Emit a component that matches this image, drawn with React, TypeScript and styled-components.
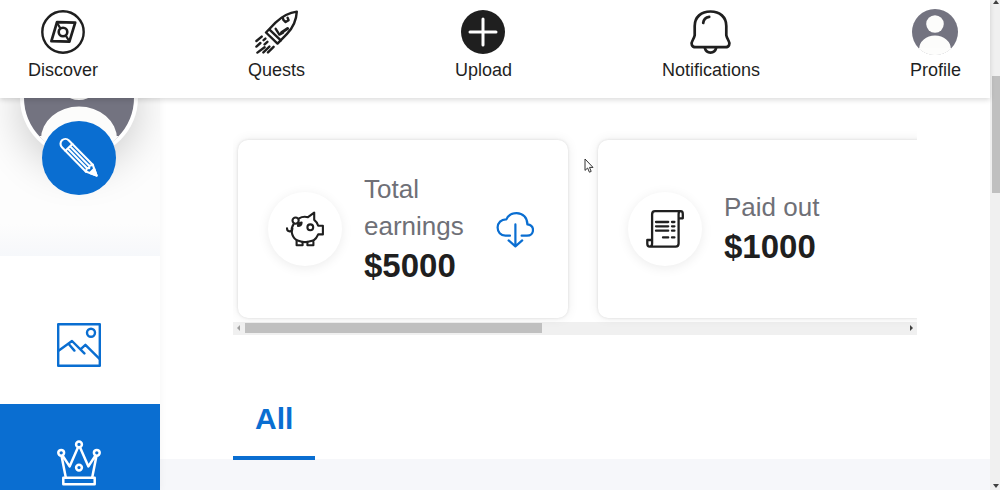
import React from "react";
import styled, { createGlobalStyle } from "styled-components";

const blue = "#0a6ed1";
const ink = "#1f1f1f";

const GlobalStyle = createGlobalStyle`
  * { box-sizing: border-box; }
  body {
    margin: 0;
    background: #f6f7fa;
    color: ${ink};
    font-family: "Liberation Sans", Arial, sans-serif;
  }
  button { font: inherit; color: inherit; border: 0; background: none; padding: 0; cursor: pointer; }
  a { color: inherit; text-decoration: none; }
  svg { display: block; flex: none; }
`;

const Shell = styled.div`
  display: flex;
  height: 100vh;
  overflow: hidden;
  position: relative;
`;

const Page = styled.div`
  flex: 1;
  min-width: 0;
  display: flex;
  flex-direction: column;
`;

const Header = styled.header`
  position: relative;
  z-index: 2;
  flex: none;
  background: #fff;
  box-shadow: 0 2px 5px rgba(0, 0, 0, 0.14);
`;

const TopNav = styled.nav`
  display: flex;
  justify-content: space-between;
  padding: 10px 29px 17px 28px;
`;

const TopLink = styled.a`
  display: flex;
  flex-direction: column;
  align-items: center;
  gap: 5px;
  font-size: 18px;
  line-height: 22px;
`;

const IconSlot = styled.span`
  display: flex;
  align-items: center;
  justify-content: center;
  height: 44px;
`;

const Body = styled.div`
  flex: 1;
  min-height: 0;
  display: flex;
`;

const Sidebar = styled.aside`
  position: relative;
  z-index: 1;
  flex: none;
  width: 160px;
  display: flex;
  flex-direction: column;
  background: #fff;
  box-shadow: 0 0 8px rgba(0, 0, 0, 0.05);
`;

const ProfileBlock = styled.div`
  flex: none;
  height: 158px;
  display: flex;
  justify-content: center;
  overflow: hidden;
  background: linear-gradient(#fdfdfd 0 126px, #f8f9fb 148px, #f6f8fb);
`;

const AvatarRing = styled.div`
  position: relative;
  width: 118px;
  height: 118px;
  margin: -59px 2px 0 0;
  padding: 4px;
  border-radius: 50%;
  background: #fff;
  box-shadow: 0 10px 44px rgba(0, 0, 0, 0.2);
`;

const EditButton = styled.button`
  position: absolute;
  top: 82px;
  left: 22px;
  width: 74px;
  height: 74px;
  border-radius: 50%;
  background: ${blue};
  color: #fff;
`;

const SideNav = styled.nav`
  flex: none;
  padding-top: 30px;
`;

const SideLink = styled.a<{ $active?: boolean }>`
  display: flex;
  align-items: center;
  justify-content: center;
  height: 118px;
  padding-right: 2px;
  color: ${(p) => (p.$active ? "#fff" : blue)};
  background: ${(p) => (p.$active ? blue : "transparent")};
`;

const Main = styled.main`
  flex: 1;
  min-width: 0;
`;

const Panel = styled.section`
  background: #fff;
  padding: 32px 73px 0;
`;

const CardScroller = styled.div`
  overflow: hidden;
`;

const CardRow = styled.div`
  display: flex;
  gap: 30px;
  padding: 10px 5px 4px;
`;

const Card = styled.article`
  flex: none;
  display: flex;
  align-items: center;
  gap: 22px;
  width: 330px;
  height: 178px;
  padding: 0 34px 0 30px;
  border-radius: 10px;
  background: #fff;
  box-shadow: 0 0 3px rgba(0, 0, 0, 0.12), 0 0 12px rgba(0, 0, 0, 0.08);
`;

const CardIcon = styled.span`
  flex: none;
  display: flex;
  align-items: center;
  justify-content: center;
  width: 74px;
  height: 74px;
  border-radius: 50%;
  box-shadow: 0 2px 12px rgba(0, 0, 0, 0.08);
`;

const CardText = styled.div`
  flex: 1;
  min-width: 0;
  padding-bottom: 1px;
`;

const CardLabel = styled.div<{ $wrap?: boolean }>`
  width: ${(p) => (p.$wrap ? "min-content" : "auto")};
  font-size: 26px;
  line-height: 37px;
  color: #6f7077;
`;

const CardValue = styled.div`
  font-size: 33px;
  line-height: 42px;
  font-weight: 700;
`;

const DownloadButton = styled.button`
  flex: none;
  color: ${blue};
`;

const HorizontalBar = styled.div`
  display: flex;
  height: 13px;
  padding: 1px 0 2px;
  background: #f0f0f0;
`;

const BarArrow = styled.span`
  flex: none;
  display: flex;
  align-items: center;
  justify-content: center;
  width: 12px;
`;

const HorizontalRail = styled.div`
  flex: 1;
`;

const HorizontalThumb = styled.div`
  width: 45%;
  height: 10px;
  background: #c0c0c0;
`;

const Tabs = styled.div`
  display: flex;
  margin-top: 65px;
`;

const Tab = styled.button`
  height: 60px;
  margin-bottom: -1px;
  padding: 0 22px 18px;
  border-bottom: 4px solid ${blue};
  color: ${blue};
  font-size: 30px;
  line-height: 36px;
  font-weight: 700;
`;

const VerticalBar = styled.div`
  flex: none;
  display: flex;
  flex-direction: column;
  align-items: center;
  width: 10px;
  padding: 0 0 1px 2px;
  background: #f0f0f0;
`;

const VerticalRail = styled.div`
  flex: 1;
  align-self: stretch;
  padding-top: 70px;
`;

const VerticalThumb = styled.div`
  height: 117px;
  background: #c0c0c0;
`;

const Pointer = styled.svg`
  position: absolute;
  left: 584px;
  top: 158px;
`;

const line = {
  fill: "none",
  stroke: "currentColor",
  strokeLinecap: "round" as const,
  strokeLinejoin: "round" as const,
  "aria-hidden": true,
};

const CompassIcon = () => (
  <svg {...line} width="44" height="44" viewBox="0 0 44 44" strokeWidth="2.4">
    <circle cx="22" cy="22" r="20.7" />
    <path d="M16 12.2 34.2 12.6 28.4 31.6 10.4 31.2Z" strokeWidth="2.7" />
    <circle cx="22" cy="22" r="4.3" strokeWidth="2.6" />
    <path d="M16 12.8 19.4 18.4M24.8 25.6 28.2 31" strokeWidth="2.2" />
  </svg>
);

const RocketIcon = () => (
  <svg {...line} width="44" height="44" viewBox="0 0 44 44" strokeWidth="2.4">
    <path d="M42.800 1.600C34.500 2.600 28 6.400 21.500 12.600L12 22.500 23.500 33.600 33 23.800C39 17.600 42.400 10 42.800 1.600Z" />
    <path d="M15.800 19.800 26.800 30.400M21.700 18.800 25.400 24.600 29 22.600" />
    <path d="M27.600 22.400 33.600 18.600" strokeWidth="3" />
    <path d="M28.600 7.600 29.600 10.200 31.600 12 34.600 10.200 33.600 7.800" />
    <path d="M7.700 26.600 2.400 31M11.400 28.600 9.600 30.200M6.400 33 2.400 36.600M13.400 31.800 10.600 34.400M10.600 37.200 3.400 42.600M15.400 36.600 9.400 42.400M19.600 36.800 14 42.400" />
  </svg>
);

const PlusIcon = () => (
  <svg {...line} width="44" height="44" viewBox="0 0 44 44">
    <circle cx="22" cy="22" r="22" fill={ink} stroke="none" />
    <path d="M22 9V35M9 22H35" stroke="#fff" strokeWidth="3" />
  </svg>
);

const BellIcon = () => (
  <svg {...line} width="44" height="44" viewBox="0 0 44 44" strokeWidth="2.7">
    <path d="M5.700 16C5.700 7 12.200 1.500 21.500 1.500S37.300 7 37.300 16V25.200Q37.800 27.600 39.400 30.400C41.600 34 40 37.200 36.400 37.200H6.600C3 37.200 1.400 34 3.600 30.400Q5.200 27.600 5.700 25.200Z" />
    <path d="M15.900 38.200C16.700 41.400 18.700 42.600 21.500 42.600S26.300 41.400 27.100 38.200M14.200 13C14.600 9.400 16.800 7.200 20.200 6.800" />
  </svg>
);

const AvatarIcon = ({ size }: { size: number }) => (
  <svg width={size} height={size} viewBox="0 0 110 110" aria-hidden="true">
    <defs>
      <clipPath id={`avatar-${size}`}>
        <circle cx="55" cy="55" r="55" />
      </clipPath>
    </defs>
    <g clipPath={`url(#avatar-${size})`}>
      <rect width="110" height="110" fill="#737380" />
      <circle cx="55" cy="36" r="21" fill="#fcfcfb" />
      <path d="M17 110V96a38 32.500 0 0 1 76 0V110Z" fill="#fcfcfb" />
      <path d="M0 93H110V110H0Z" fill="#fdfdfc" />
    </g>
  </svg>
);

const PencilIcon = () => (
  <svg {...line} width="74" height="74" viewBox="0 0 74 74" strokeWidth="2.100">
    <g transform="translate(54.600 54.600) rotate(45.500)">
      <path d="M0 0-10.500-4.900H-44.500A4.900 4.900 0 0 0-44.500 4.900H-10.500Z" />
      <path d="M-39.500-4.900V4.900M-39.500-1.600H-12M-39.500 1.600H-12M-10.500-4.900-12-1.600-10.500 0-12 1.600-10.500 4.900" />
      <path d="M0 0-6.500-3V3Z" fill="currentColor" />
    </g>
  </svg>
);

const PictureIcon = () => (
  <svg {...line} width="44" height="44" viewBox="0 0 44 44" strokeWidth="2.400">
    <rect x="1.200" y="1.200" width="41.600" height="41.600" />
    <circle cx="34" cy="9.800" r="4" />
    <path d="M1.200 28 15 18 27.400 30.400M11.500 20.800 17.400 27.600M24 25.800 28.400 21.800 42.800 36.200" />
  </svg>
);

const CrownIcon = () => (
  <svg {...line} width="44" height="46" viewBox="0 0 44 46" strokeWidth="2.500">
    <circle cx="22" cy="4.400" r="2.900" />
    <circle cx="4.200" cy="12.800" r="2.900" />
    <circle cx="39.800" cy="12.800" r="2.900" />
    <circle cx="22" cy="27.600" r="2.900" />
    <path d="M4.600 16.200 8.800 37.600M5.800 15.800 12.600 26.400 20.800 7.800M23.200 7.800 31.400 26.400 38.200 15.800M39.400 16.200 35.200 37.600" />
    <rect x="6.300" y="37.800" width="31.400" height="6.400" />
  </svg>
);

const PiggyIcon = () => (
  <svg {...line} width="38" height="38" viewBox="0 0 38 38" strokeWidth="2.100">
    <path d="M13 8.400Q17 6 22 7.200L28.200 2.600V9.800Q31.400 12.200 32.200 15.800H36.900V24.400H32.200Q30.600 28.400 27.400 30.600V35.300H21.400V31.800Q19 32.400 16.600 31.800V35.300H10.600V30.200C4.800 26.200 4.600 18.400 7.600 14.200" />
    <circle cx="24.300" cy="17.300" r="2.900" />
    <circle cx="9.600" cy="10.600" r="3.100" />
    <path d="M1 18.200C1 22.400 6 22.400 6.400 18.600M12 16C11.800 13.800 13.600 12.800 15.600 12.600 15.400 14.800 14 16 12 16ZM10.800 30.200 15.800 31.800M22 31.800 27.200 30.600" />
  </svg>
);

const ReceiptIcon = () => (
  <svg {...line} width="38" height="38" viewBox="0 0 38 38" strokeWidth="2.300">
    <path d="M35 1.200H9Q6.100 1.200 6.100 4.400V33.500Q6.100 36.700 3.700 36.700 1.300 36.700 1.300 33.800V30H6M3.700 36.700H29.600Q32.600 36.700 32.600 33.600V4.200Q32.600 1.200 34.800 1.200 36.800 1.200 36.800 4V8.300H32.800" />
    <path d="M10 12H22.200M26 12H28.400M10 16.300H22.200M26 16.300H28.400M10 20.700H22.200M26 20.700H28.400M17 27.400H22.200M26 27.400H28.400" />
  </svg>
);

const CloudDownloadIcon = () => (
  <svg {...line} width="38" height="38" viewBox="0 0 38 38" strokeWidth="2.200">
    <path d="M14 25.700H9.400C4.600 25.700 1.600 22 1.600 17.600 1.600 12.800 5.200 9.200 10.400 9.400 12.200 5.400 15.800 3.100 20.600 3.100 27 3.100 31.400 8 31.400 14.400 35 14.800 37 17 37 20 37 23.400 34.600 25.700 31 25.700H25.600" />
    <path d="M19.400 14.400V36.200M12.600 30.400 19.400 36.400 26.200 30.400" />
  </svg>
);

const Arrow = ({ points, color }: { points: string; color: string }) => (
  <svg width="6" height="6" viewBox="0 0 6 6" aria-hidden="true">
    <polygon points={points} fill={color} />
  </svg>
);

const topLinks = [
  { label: "Discover", icon: <CompassIcon /> },
  { label: "Quests", icon: <RocketIcon /> },
  { label: "Upload", icon: <PlusIcon /> },
  { label: "Notifications", icon: <BellIcon /> },
  { label: "Profile", icon: <AvatarIcon size={46} /> },
];

export default function App() {
  return (
    <>
      <GlobalStyle />
      <Shell>
        <Page>
          <Header>
            <TopNav>
              {topLinks.map((item) => (
                <TopLink href="#" key={item.label}>
                  <IconSlot>{item.icon}</IconSlot>
                  {item.label}
                </TopLink>
              ))}
            </TopNav>
          </Header>
          <Body>
            <Sidebar>
              <ProfileBlock>
                <AvatarRing>
                  <AvatarIcon size={110} />
                  <EditButton aria-label="Edit profile">
                    <PencilIcon />
                  </EditButton>
                </AvatarRing>
              </ProfileBlock>
              <SideNav>
                <SideLink href="#" aria-label="Gallery">
                  <PictureIcon />
                </SideLink>
                <SideLink href="#" aria-label="Rewards" $active>
                  <CrownIcon />
                </SideLink>
              </SideNav>
            </Sidebar>
            <Main>
              <Panel>
                <CardScroller>
                  <CardRow>
                    <Card>
                      <CardIcon>
                        <PiggyIcon />
                      </CardIcon>
                      <CardText>
                        <CardLabel $wrap>Total earnings</CardLabel>
                        <CardValue>$5000</CardValue>
                      </CardText>
                      <DownloadButton aria-label="Download earnings">
                        <CloudDownloadIcon />
                      </DownloadButton>
                    </Card>
                    <Card>
                      <CardIcon>
                        <ReceiptIcon />
                      </CardIcon>
                      <CardText>
                        <CardLabel>Paid out</CardLabel>
                        <CardValue>$1000</CardValue>
                      </CardText>
                    </Card>
                  </CardRow>
                  <HorizontalBar>
                    <BarArrow>
                      <Arrow points="4,0 4,6 1,3" color="#a0a0a0" />
                    </BarArrow>
                    <HorizontalRail>
                      <HorizontalThumb />
                    </HorizontalRail>
                    <BarArrow>
                      <Arrow points="2,0 2,6 5,3" color="#404040" />
                    </BarArrow>
                  </HorizontalBar>
                </CardScroller>
                <Tabs role="tablist">
                  <Tab role="tab" aria-selected="true">
                    All
                  </Tab>
                </Tabs>
              </Panel>
            </Main>
          </Body>
        </Page>
        <VerticalBar>
          <Arrow points="0,4 6,4 3,0" color="#404040" />
          <VerticalRail>
            <VerticalThumb />
          </VerticalRail>
          <Arrow points="0,1 6,1 3,5" color="#404040" />
        </VerticalBar>
        <Pointer width="10" height="16" viewBox="0 0 10 16" aria-hidden="true">
          <path
            d="M1 1V12.400L3.600 10 5.400 14.200 7.200 13.400 5.500 9.400H9Z"
            fill="#fff"
            stroke="#333"
            strokeWidth="1"
          />
        </Pointer>
      </Shell>
    </>
  );
}
